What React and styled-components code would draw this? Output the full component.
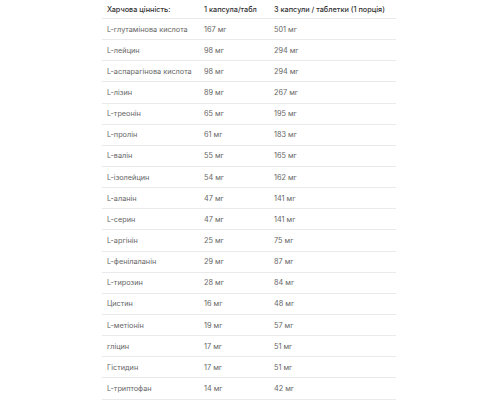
import styled, { createGlobalStyle } from 'styled-components'

const GlobalStyle = createGlobalStyle`
  body {
    margin: 0;
    background: #fff;
    font-family: Inter, "Noto Sans", sans-serif;
  }
`

const rows = [
  ['L-глутамінова кислота', '167 мг', '501 мг'],
  ['L-лейцин', '98 мг', '294 мг'],
  ['L-аспарагінова кислота', '98 мг', '294 мг'],
  ['L-лізин', '89 мг', '267 мг'],
  ['L-треонін', '65 мг', '195 мг'],
  ['L-пролін', '61 мг', '183 мг'],
  ['L-валін', '55 мг', '165 мг'],
  ['L-ізолейцин', '54 мг', '162 мг'],
  ['L-аланін', '47 мг', '141 мг'],
  ['L-серин', '47 мг', '141 мг'],
  ['L-аргінін', '25 мг', '75 мг'],
  ['L-фенілаланін', '29 мг', '87 мг'],
  ['L-тирозин', '28 мг', '84 мг'],
  ['Цистин', '16 мг', '48 мг'],
  ['L-метіонін', '19 мг', '57 мг'],
  ['гліцин', '17 мг', '51 мг'],
  ['Гістидин', '17 мг', '51 мг'],
  ['L-триптофан', '14 мг', '42 мг'],
]

export default function App() {
  return (
    <>
      <GlobalStyle />
      <Table>
        <Row $head>
          <Cell>Харчова цінність:</Cell>
          <Cell>1 капсула/табл</Cell>
          <Cell>3 капсули / таблетки (1 порція)</Cell>
        </Row>
        {rows.map(([name, one, three]) => (
          <Row key={name}>
            <Cell>{name}</Cell>
            <Cell>{one}</Cell>
            <Cell>{three}</Cell>
          </Row>
        ))}
      </Table>
    </>
  )
}

const Table = styled.div`
  width: 294px;
  margin-left: 102px;
  display: flex;
  flex-direction: column;
`

const Row = styled.div`
  display: grid;
  grid-template-columns: 97px 70px 1fr;
  align-items: center;
  height: ${p => (p.$head ? '18px' : '20.15px')};
  padding-left: 5px;
  border-bottom: 1px solid #e8eaee;
  font-size: 7.3px;
  font-weight: ${p => (p.$head ? 500 : 400)};
  color: ${p => (p.$head ? '#333' : '#666')};
`

const Cell = styled.div`
  white-space: nowrap;
`
